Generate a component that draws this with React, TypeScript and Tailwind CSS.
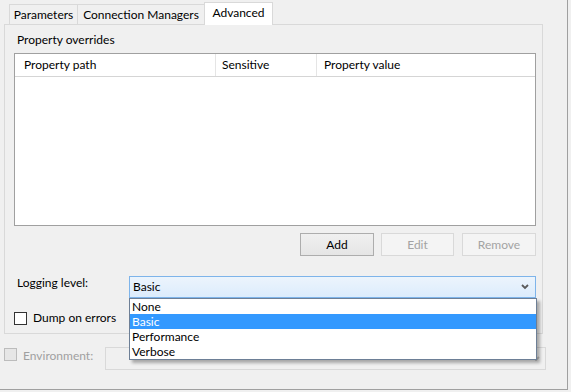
import React from "react";

const tabs = [
  { label: "Parameters", w: "w-[68px]" },
  { label: "Connection Managers", w: "w-[127px]" },
];

function Button({ label, w, disabled }: { label: string; w: string; disabled?: boolean }) {
  return (
    <div
      className={
        "h-[23px] flex items-center justify-center border " +
        w +
        (disabled
          ? " border-[#d9d9d9] bg-[#f4f4f4] text-[#a3a3a3]"
          : " border-[#adadad] bg-gradient-to-b from-[#f0f0f0] to-[#e5e5e5] text-black")
      }
    >
      {label}
    </div>
  );
}

function Chevron({ color }: { color: string }) {
  return (
    <svg width="8" height="6" viewBox="0 0 8 6">
      <path d="M1 1 L4 4 L7 1" fill="none" stroke={color} strokeWidth="1.8" />
    </svg>
  );
}

export default function App() {
  const levels = ["None", "Basic", "Performance", "Verbose"];
  return (
    <div className="w-[571px] h-[392px] bg-[#f0f0f0] font-['Lato',sans-serif] text-[12px] leading-[16px] text-black">
      <div className="w-[568px] h-[390px] border-r border-b border-[#a0a0a0] pt-[2px] pl-[4px]">
        {/* tab strip */}
        <div className="relative z-10 flex items-end h-[22px] pl-[5px]">
          {tabs.map((t) => (
            <div
              key={t.label}
              className={"h-[20px] flex items-center justify-center border-l border-t border-[#d9d9d9] bg-[#f0f0f0] " + t.w}
            >
              {t.label}
            </div>
          ))}
          <div className="w-[69px] h-[23px] -mb-px flex items-start justify-center pt-[2px] border-l border-t border-r border-[#d9d9d9] bg-white">
            Advanced
          </div>
        </div>

        {/* tab panel */}
        <div className="w-[539px] h-[310px] border border-[#d9d9d9] pl-[9px] pt-[7px]">
          <div className="pl-[3px] h-[16px]">Property overrides</div>

          <div className="mt-[5px] w-[522px] h-[173px] border border-[#a0a0a0] bg-white">
            <div className="flex h-[23px] border-b border-[#d5d5d5]">
              <div className="w-[201px] pl-[9px] flex items-center border-r border-[#e5e5e5]">Property path</div>
              <div className="w-[101px] pl-[6px] flex items-center border-r border-[#e5e5e5]">Sensitive</div>
              <div className="flex-1 pl-[7px] flex items-center">Property value</div>
            </div>
          </div>

          <div className="mt-[7px] w-[522px] flex justify-end">
            <Button label="Add" w="w-[74px]" />
            <div className="ml-[7px]">
              <Button label="Edit" w="w-[73px]" disabled />
            </div>
            <div className="ml-[8px]">
              <Button label="Remove" w="w-[74px]" disabled />
            </div>
          </div>

          <div className="mt-[20px] flex items-start">
            <div className="w-[115px] pl-[3px] -mt-[1px]">Logging level:</div>
            <div className="relative z-20 w-[407px] h-[22px] border border-[#7eb4ea] bg-gradient-to-b from-[#ecf4fc] to-[#dcecfc] flex items-center justify-between pl-[3px] pr-[6px]">
              <span>Basic</span>
              <Chevron color="#5a5a5a" />
              <div className="absolute left-[-1px] top-[21px] w-[408px] h-[62px] border border-[#6d7f96] bg-white shadow-[3px_3px_3px_rgba(0,0,0,0.3)] flex flex-col">
                {levels.map((l) => (
                  <div
                    key={l}
                    className={"h-[15px] leading-[15px] pl-[2px] " + (l === "Basic" ? "bg-[#3399ff] text-white" : "")}
                  >
                    {l}
                  </div>
                ))}
              </div>
            </div>
          </div>

          <div className="mt-[12px] flex items-center">
            <div className="w-[13px] h-[13px] border border-[#333333] bg-white" />
            <span className="ml-[6px]">Dump on errors</span>
          </div>
        </div>

        {/* environment row */}
        <div className="mt-[13px] flex items-start">
          <div className="mt-[1px] w-[13px] h-[13px] border border-[#bcbcbc] bg-[#e6e6e6]" />
          <span className="ml-[6px] mt-[1px] w-[82px] text-[#a0a0a0]">Environment:</span>
          <div className="w-[441px] h-[23px] border border-[#d9d9d9] bg-[#f0f0f0] flex items-center justify-end pr-[5px]">
            <Chevron color="#c0c0c0" />
          </div>
        </div>
      </div>
    </div>
  );
}
